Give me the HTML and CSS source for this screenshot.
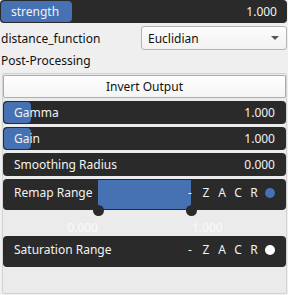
FILE: index.html
```html
<!DOCTYPE html>
<html lang="en">
  <head>
    <meta charset="UTF-8" />
    <meta name="viewport" content="width=device-width, initial-scale=1.0" />
    <title>Post-Processing</title>
    <link rel="stylesheet" href="styles.css">
  </head>
  <body>
    <div class="panel">
      <div class="slider slider-wide">
        <div class="fill" style="width: 71px"></div>
        <span class="label">strength</span>
        <span class="value">1.000</span>
      </div>

      <div class="field-row">
        <span class="field-label">distance_function</span>
        <div class="combo">
          <span>Euclidian</span>
          <span class="arrow"></span>
        </div>
      </div>

      <div class="section-title">Post-Processing</div>

      <div class="group">
        <button class="btn">Invert Output</button>

        <div class="slider">
          <div class="fill" style="width: 27px"></div>
          <span class="label">Gamma</span>
          <span class="value">1.000</span>
        </div>
        <div class="slider">
          <div class="fill" style="width: 27px"></div>
          <span class="label">Gain</span>
          <span class="value">1.000</span>
        </div>
        <div class="slider">
          <span class="label">Smoothing Radius</span>
          <span class="value">0.000</span>
        </div>

        <div class="range">
          <div class="range-fill" style="left: 95px; width: 93px"></div>
          <span class="handle" style="left: 95px"></span>
          <span class="handle" style="left: 188px"></span>
          <span class="tick tick-left" style="left: 95px">0.000</span>
          <span class="tick" style="left: 189px">1.000</span>
          <span class="label">Remap Range</span>
          <div class="flags">
            <span>-</span><span>Z</span><span>A</span><span>C</span><span>R</span>
            <span class="dot dot-blue"></span>
          </div>
        </div>

        <div class="range range-last">
          <span class="label">Saturation Range</span>
          <div class="flags">
            <span>-</span><span>Z</span><span>A</span><span>C</span><span>R</span>
            <span class="dot dot-white"></span>
          </div>
        </div>
      </div>
    </div>
  </body>
</html>
```

FILE: styles.css
```css
* {
  margin: 0;
  padding: 0;
  box-sizing: border-box;
  font-family: "Noto Sans", "Open Sans", sans-serif;
}

body {
  background-color: #efefef;
  font-size: 12px;
  color: #111;
  width: 288px;
  height: 295px;
  overflow: hidden;
}

.panel {
  display: flex;
  flex-direction: column;
  height: 295px;
}

.slider {
  position: relative;
  display: flex;
  justify-content: space-between;
  align-items: center;
  height: 23px;
  padding: 0 11px 1px 11px;
  background-color: #2a2a2a;
  border-radius: 4px;
  color: #f2f2f2;
  margin-top: 3px;
}

.slider-wide {
  width: 287px;
  margin-top: 0;
  padding: 0 10px 1px 11px;
}

.fill {
  position: absolute;
  left: 1px;
  top: 1px;
  bottom: 1px;
  background-color: #4671b3;
  border-radius: 4px;
}

.label,
.value {
  position: relative;
}

.field-row {
  display: flex;
  justify-content: space-between;
  align-items: center;
  height: 24px;
  margin-top: 3px;
  padding-left: 1px;
}

.combo {
  display: flex;
  justify-content: space-between;
  align-items: center;
  width: 146px;
  height: 24px;
  margin-right: 1px;
  padding: 0 7px 0 6px;
  border: 1px solid #b4b4b4;
  border-radius: 3px;
  background: linear-gradient(#fdfdfd, #f1f1f1);
}

.arrow {
  width: 0;
  height: 0;
  border-left: 4px solid transparent;
  border-right: 4px solid transparent;
  border-top: 4px solid #555;
}

.section-title {
  height: 22px;
  line-height: 21px;
  padding-left: 1px;
}

.group {
  flex: 1;
  display: flex;
  flex-direction: column;
  margin: 1px 1px 1px 2px;
  padding: 1px 0 0 0;
  border: 1px solid #d2d2d2;
  border-radius: 2px;
  background-color: #ebebeb;
}

.btn {
  height: 23px;
  font-size: 12px;
  color: #111;
  border: 1px solid #adadad;
  border-radius: 2px;
  background: linear-gradient(#fefefe, #f4f4f4);
}

.range {
  position: relative;
  display: flex;
  align-items: center;
  justify-content: space-between;
  height: 31px;
  margin-top: 3px;
  padding: 0 8px 5px 11px;
  background-color: #2a2a2a;
  border-radius: 4px;
  color: #f2f2f2;
}

.range-last {
  margin-top: 26px;
}

.range-fill {
  position: absolute;
  top: 1px;
  bottom: 1px;
  background-color: #4671b3;
}

.handle {
  position: absolute;
  bottom: -6px;
  width: 11px;
  height: 11px;
  margin-left: -5px;
  border-radius: 50%;
  background-color: #2a2a2a;
}

.tick {
  position: absolute;
  top: 40px;
  color: #fafafa;
}

.tick-left {
  transform: translateX(-100%);
}

.flags {
  position: relative;
  display: flex;
  align-items: center;
}

.flags span {
  width: 16px;
  text-align: center;
}

.flags .dot {
  width: 10px;
  height: 10px;
  margin: 1px 3px 0 3px;
  border-radius: 50%;
}

.dot-blue {
  background-color: #4671b3;
}

.dot-white {
  background-color: #ffffff;
}
```
